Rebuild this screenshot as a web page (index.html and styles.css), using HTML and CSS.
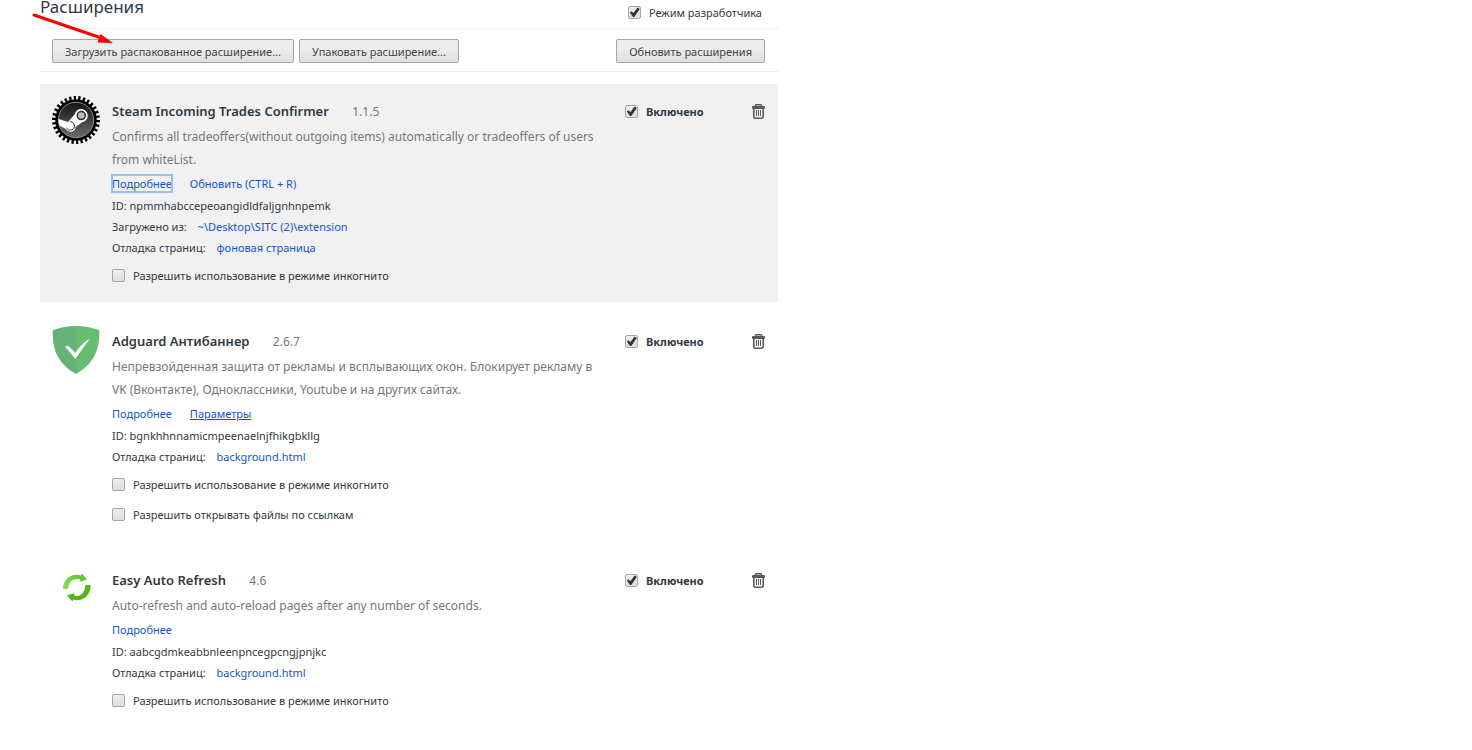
FILE: index.html
```html
<!DOCTYPE html>
<html lang="ru">
<head>
    <meta charset="UTF-8">
    <meta name="viewport" content="width=device-width, initial-scale=1.0">
    <title>Расширения</title>
    <link rel="stylesheet" href="styles.css">
</head>
<body>

<!-- Shared trash icon -->
<svg class="sprite" aria-hidden="true">
    <symbol id="trash" viewBox="0 0 13 15">
        <path d="M3 2 L4 0.7 H9 L10 2" fill="none" stroke="#5a5a5a" stroke-width="1.4"/>
        <rect x="0" y="2" width="13" height="3" rx="1" fill="#5a5a5a"/>
        <path d="M1.8 5 V12.5 Q1.8 14.2 3.5 14.2 H9.5 Q11.2 14.2 11.2 12.5 V5" fill="none" stroke="#5a5a5a" stroke-width="1.6"/>
        <path d="M4.5 6 V12 M6.5 6 V12 M8.5 6 V12" stroke="#5a5a5a" stroke-width="1"/>
    </symbol>
</svg>

<div class="extensions-page">

    <!-- Page header -->
    <header class="page-header">
        <h1>Расширения</h1>
        <label class="check-label"><input type="checkbox" checked> Режим разработчика</label>
    </header>

    <!-- Developer toolbar -->
    <div class="dev-toolbar">
        <button type="button">Загрузить распакованное расширение...</button>
        <button type="button">Упаковать расширение...</button>
        <button type="button" class="update-btn">Обновить расширения</button>
        <svg class="arrow" width="82" height="34" viewBox="0 0 82 34" aria-hidden="true">
            <path d="M2 2 L68 24.5" stroke="#ff0000" stroke-width="3" stroke-linecap="round"/>
            <path d="M81 30 L65.5 29.5 L68.5 21 Z" fill="#ff0000"/>
        </svg>
    </div>

    <main class="extension-list">

        <section class="extension selected">
            <svg class="extension-icon" viewBox="0 0 48 48" aria-hidden="true">
                <defs>
                    <linearGradient id="steam-disc" x1="0" y1="0" x2="0" y2="1">
                        <stop offset="0" stop-color="#141414"/>
                        <stop offset="1" stop-color="#6c6c6c"/>
                    </linearGradient>
                    <clipPath id="steam-clip"><circle cx="24" cy="24" r="17.5"/></clipPath>
                </defs>
                <circle cx="24" cy="24" r="22" fill="none" stroke="#000" stroke-width="4" pathLength="60" stroke-dasharray="1 1"/>
                <circle cx="24" cy="24" r="20.8" fill="#000"/>
                <circle cx="24" cy="24" r="17.7" fill="url(#steam-disc)" stroke="#a8a8a8" stroke-width="0.8"/>
                <g clip-path="url(#steam-clip)">
                    <path d="M4 22 L16 26 L22.7 18.3 A6.6 6.6 0 1 1 30 26.2 L23.5 31 A5 5 0 0 1 14 33 L4 28 Z" fill="#fff"/>
                    <path d="M14.5 32 A4.3 4.3 0 1 0 18 25.6" fill="none" stroke="#3c3c3c" stroke-width="1"/>
                </g>
                <circle cx="29.3" cy="19.6" r="4" fill="#bbb" stroke="#2c2c2c" stroke-width="1.5"/>
            </svg>
            <div class="details">
                <h2>Steam Incoming Trades Confirmer <span class="version">1.1.5</span></h2>
                <p class="description">Confirms all tradeoffers(without outgoing items) automatically or tradeoffers of users from whiteList.</p>
                <div class="links"><a href="#" class="focused">Подробнее</a><a href="#">Обновить (CTRL + R)</a></div>
                <div class="info">ID: npmmhabccepeoangidldfaljgnhnpemk</div>
                <div class="info">Загружено из: <a href="#">~\Desktop\SITC (2)\extension</a></div>
                <div class="info">Отладка страниц: <a href="#">фоновая страница</a></div>
                <div class="options">
                    <label class="check-label"><input type="checkbox"> Разрешить использование в режиме инкогнито</label>
                </div>
            </div>
            <div class="controls">
                <label class="check-label enabled"><input type="checkbox" checked> Включено</label>
                <button type="button" class="trash-btn" aria-label="Удалить"><svg width="13" height="15"><use href="#trash"/></svg></button>
            </div>
        </section>

        <section class="extension">
            <svg class="extension-icon" viewBox="0 0 48 48" aria-hidden="true">
                <path d="M24 0 C16 0 7.5 1.5 0.7 4.3 C0.7 15 0.5 35 24 48 Z" fill="#67b279"/>
                <path d="M24 0 C32 0 40.5 1.5 47.3 4.3 C47.3 15 47.5 35 24 48 Z" fill="#68bc71"/>
                <path d="M13 20.5 C15.5 19 17.5 20.5 19 22.5 L23.3 27 C27 21.5 32 15.5 37.5 13 C33 19 28 26 23.5 33 Z" fill="#fff"/>
            </svg>
            <div class="details">
                <h2>Adguard Антибаннер <span class="version">2.6.7</span></h2>
                <p class="description">Непревзойденная защита от рекламы и всплывающих окон. Блокирует рекламу в VK (Вконтакте), Одноклассники, Youtube и на других сайтах.</p>
                <div class="links"><a href="#">Подробнее</a><a href="#" class="underlined">Параметры</a></div>
                <div class="info">ID: bgnkhhnnamicmpeenaelnjfhikgbkllg</div>
                <div class="info">Отладка страниц: <a href="#">background.html</a></div>
                <div class="options">
                    <label class="check-label"><input type="checkbox"> Разрешить использование в режиме инкогнито</label>
                    <label class="check-label"><input type="checkbox"> Разрешить открывать файлы по ссылкам</label>
                </div>
            </div>
            <div class="controls">
                <label class="check-label enabled"><input type="checkbox" checked> Включено</label>
                <button type="button" class="trash-btn" aria-label="Удалить"><svg width="13" height="15"><use href="#trash"/></svg></button>
            </div>
        </section>

        <section class="extension">
            <svg class="extension-icon" viewBox="0 0 48 48" aria-hidden="true">
                <defs>
                    <linearGradient id="refresh-top" x1="0" y1="1" x2="1" y2="0">
                        <stop offset="0" stop-color="#8fdc5a"/>
                        <stop offset="1" stop-color="#5cc02c"/>
                    </linearGradient>
                </defs>
                <path d="M11 24 C11 14 20 7.5 29 10.5 L30 8.5 L35 14.5 L27.5 17 L28.3 14.5 C21 12.5 16.5 17 16.3 24 Z" fill="url(#refresh-top)"/>
                <path d="M38.5 20 C39 30.5 30 37.5 21 34.5 L20.5 36.5 L15 30.5 L22.5 28 L22 30.5 C28 32.5 33.5 27.5 33.3 20 Z" fill="#50b810"/>
            </svg>
            <div class="details">
                <h2>Easy Auto Refresh <span class="version">4.6</span></h2>
                <p class="description">Auto-refresh and auto-reload pages after any number of seconds.</p>
                <div class="links"><a href="#">Подробнее</a></div>
                <div class="info">ID: aabcgdmkeabbnleenpncegpcngjpnjkc</div>
                <div class="info">Отладка страниц: <a href="#">background.html</a></div>
                <div class="options">
                    <label class="check-label"><input type="checkbox"> Разрешить использование в режиме инкогнито</label>
                </div>
            </div>
            <div class="controls">
                <label class="check-label enabled"><input type="checkbox" checked> Включено</label>
                <button type="button" class="trash-btn" aria-label="Удалить"><svg width="13" height="15"><use href="#trash"/></svg></button>
            </div>
        </section>

    </main>
</div>

</body>
</html>
```

FILE: styles.css
```css
/* Basic Reset */
* {
    margin: 0;
    padding: 0;
    box-sizing: border-box;
}

body {
    font-family: 'Noto Sans', 'Open Sans', sans-serif;
    font-size: 11px;
    line-height: 21px;
    color: #303942;
    background-color: #fff;
}

a {
    color: #1155cc;
    text-decoration: none;
}

.sprite {
    display: none;
}

.extensions-page {
    max-width: 738px;
    margin-left: 40px;
}

/* Header */
.page-header {
    display: flex;
    justify-content: space-between;
    align-items: flex-start;
    padding-right: 16px;
    height: 29px;
    border-bottom: 1px solid #eee;
}

.page-header h1 {
    font-size: 17px;
    font-weight: normal;
    line-height: 14px;
}

.page-header .check-label {
    padding-top: 2px;
}

/* Checkboxes */
.check-label {
    display: flex;
    align-items: center;
    gap: 8px;
}

input[type="checkbox"] {
    appearance: none;
    position: relative;
    flex: none;
    width: 13px;
    height: 13px;
    border: 1px solid #a6a6a6;
    border-radius: 2px;
    background: linear-gradient(#ededed, #dedede);
}

input[type="checkbox"]:checked::before {
    content: "";
    position: absolute;
    inset: 0;
    background-color: #333;
    clip-path: polygon(8% 50%, 24% 38%, 40% 56%, 78% 4%, 98% 18%, 48% 92%, 36% 92%);
}

/* Toolbar */
.dev-toolbar {
    position: relative;
    display: flex;
    gap: 5px;
    padding: 10px 13px 8px 12px;
    border-bottom: 1px solid #eee;
}

.dev-toolbar button {
    height: 24px;
    padding: 0 12px;
    font-family: inherit;
    font-size: 11px;
    color: #444;
    border: 1px solid #a6a6a6;
    border-radius: 2px;
    background: linear-gradient(#ededed 38%, #dedede);
    white-space: nowrap;
}

.dev-toolbar .update-btn {
    margin-left: auto;
}

.arrow {
    position: absolute;
    top: -16px;
    left: -8px;
}

/* Extension list */
.extension-list {
    display: flex;
    flex-direction: column;
    gap: 12px;
    padding-top: 12px;
}

.extension {
    display: flex;
    padding: 12px 13px 12px 12px;
}

.extension.selected {
    background-color: #f1f1f1;
}

.extension-icon {
    flex: none;
    width: 48px;
    height: 48px;
    margin-right: 12px;
}

.details {
    flex: 1;
    padding-top: 5px;
}

.details h2 {
    font-size: 13px;
    font-weight: 600;
    line-height: 21px;
}

.version {
    margin-left: 20px;
    font-size: 12px;
    font-weight: normal;
    color: #777;
}

.description {
    margin: 3px 0 2px;
    padding-right: 8px;
    font-size: 12px;
    line-height: 23px;
    color: #777;
}

.links {
    display: flex;
    gap: 18px;
    margin-bottom: 1px;
}

.links .focused {
    outline: 2px solid #9dbdf5;
    outline-offset: -1px;
    height: 17px;
    line-height: 17px;
    margin: 2px 0;
}

.links .underlined {
    text-decoration: underline;
}

.info a {
    margin-left: 8px;
}

.options {
    padding-top: 2px;
}

.options .check-label {
    height: 30px;
}

/* Enabled checkbox and trash */
.controls {
    display: flex;
    justify-content: space-between;
    align-items: flex-start;
    flex: none;
    width: 140px;
    margin-left: 12px;
    padding-top: 5px;
}

.enabled {
    font-weight: bold;
}

.trash-btn {
    display: flex;
    align-items: center;
    height: 21px;
    border: none;
    background: none;
}
```
